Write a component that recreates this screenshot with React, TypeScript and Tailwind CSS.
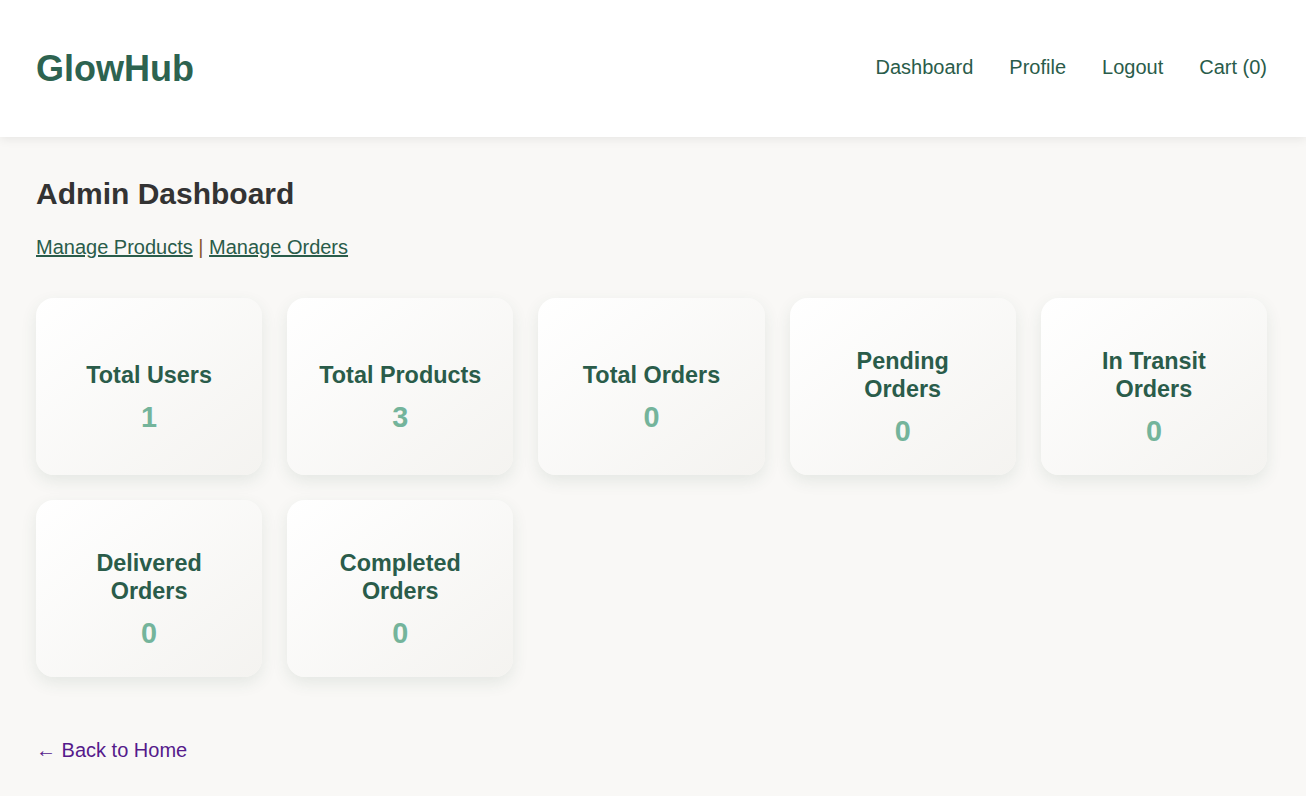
const stats = [
  { label: "Total Users", value: 1 },
  { label: "Total Products", value: 3 },
  { label: "Total Orders", value: 0 },
  { label: "Pending Orders", value: 0 },
  { label: "In Transit Orders", value: 0 },
  { label: "Delivered Orders", value: 0 },
  { label: "Completed Orders", value: 0 },
];

const navLinks = ["Dashboard", "Profile", "Logout", "Cart (0)"];

const StatCard = ({ label, value }: { label: string; value: number }) => {
  return (
    <div className="h-[177px] rounded-[18px] bg-gradient-to-br from-white to-[#f4f3f0] shadow-[0_6px_16px_rgba(45,90,70,0.1)] flex flex-col items-center justify-center pt-[22px] px-[28px] text-center">
      <h3 className="text-[23.4px] leading-[28px] font-bold text-[#2a5c4a]">{label}</h3>
      <p className="mt-[12px] text-[28.8px] leading-[33px] font-bold text-[#74b49b]">{value}</p>
    </div>
  );
};

export default function App() {
  return (
    <div className="min-h-screen bg-[#f9f8f6] font-['Liberation_Sans',Arial,sans-serif]">
      <header className="h-[137px] bg-white shadow-[0_2px_10px_rgba(0,0,0,0.08)] flex items-center justify-between pl-[36px] pr-[39px]">
        <h1 className="text-[36px] font-bold text-[#2d6350]">GlowHub</h1>
        <nav className="flex items-center gap-[36px] pb-[3px]">
          {navLinks.map((item) => (
            <a key={item} href="#" className="text-[20px] text-[#2a5c4a]">
              {item}
            </a>
          ))}
        </nav>
      </header>

      <main className="pl-[36px] pr-[39px] pt-[40px]">
        <h2 className="text-[30px] leading-[34px] font-bold text-[#333]">Admin Dashboard</h2>
        <div className="mt-[24px] text-[20px] leading-[24px]">
          <a href="#" className="underline text-[#2a5c4a]">Manage Products</a>
          <span className="text-[#8b5a2b]"> | </span>
          <a href="#" className="underline text-[#2a5c4a]">Manage Orders</a>
        </div>

        <div className="mt-[39px] grid grid-cols-5 gap-[25px]">
          {stats.map((s) => (
            <StatCard key={s.label} label={s.label} value={s.value} />
          ))}
        </div>

        <a href="#" className="block mt-[61px] text-[20px] leading-[24px] text-[#551a8b]">
          ← Back to Home
        </a>
      </main>
    </div>
  );
}
